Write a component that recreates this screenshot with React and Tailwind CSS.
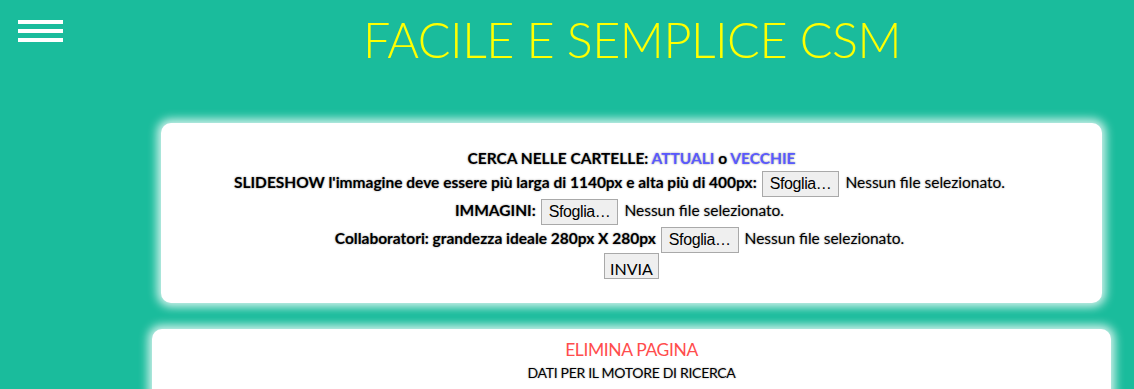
export default function App() {
  const fileRow = (
    <>
      <span className="inline-block ml-[5px] px-[7px] h-[26px] leading-[24px] border border-[#a9a9a9] bg-[#efefef] font-['Liberation_Sans',sans-serif] text-[16px] tracking-[-0.4px] font-normal text-black align-middle [text-shadow:none]">
        Sfoglia…
      </span>
      <span className="ml-[6px] font-normal">Nessun file selezionato.</span>
      <span className="inline-block w-[24px]" />
    </>
  );

  return (
    <main className="min-h-screen bg-[#1abc9c] font-['Lato','Noto_Sans',sans-serif] text-black overflow-hidden">
      {/* Header */}
      <header className="flex items-start h-[123px]">
        <button className="flex flex-col gap-[5px] ml-[18px] mt-[20px]">
          <span className="block w-[45px] h-[4px] bg-white" />
          <span className="block w-[45px] h-[4px] bg-white" />
          <span className="block w-[45px] h-[4px] bg-white" />
        </button>
        <h1 className="flex-1 text-center pl-[130px] pr-[63px] mt-[9px] text-[48.5px] font-light leading-[60px] text-[#ffff00] tracking-[-0.5px]">
          FACILE E SEMPLICE CSM
        </h1>
      </header>

      {/* Upload card */}
      <section className="ml-[161px] mr-[32px] h-[180px] bg-white rounded-[10px] shadow-[0_0_10px_4px_rgba(255,255,255,0.8)] pt-[25px] flex flex-col items-center text-[15.5px] font-bold [text-shadow:0_0_2px_rgba(0,0,0,0.45)]">
        <p className="leading-[20px]">
          CERCA NELLE CARTELLE: <span className="text-[#5959ff]">ATTUALI</span> o{" "}
          <span className="text-[#5959ff]">VECCHIE</span>
        </p>
        <p className="leading-[27px] mt-[1px]">
          SLIDESHOW l'immagine deve essere più larga di 1140px e alta più di 400px:
          {fileRow}
        </p>
        <p className="leading-[27px]">
          IMMAGINI:
          {fileRow}
        </p>
        <p className="leading-[27px]">
          Collaboratori: grandezza ideale 280px X 280px
          {fileRow}
        </p>
        <span className="mt-0 px-[5px] h-[26px] leading-[30px] border border-[#a9a9a9] bg-[#efefef] text-[16px] font-normal [text-shadow:none]">
          INVIA
        </span>
      </section>

      {/* Second card */}
      <section className="ml-[152px] mr-[23px] mt-[26px] h-[120px] bg-white rounded-[10px] shadow-[0_0_10px_4px_rgba(255,255,255,0.8)] pt-[10px] flex flex-col items-center">
        <p className="text-[17.5px] leading-[22px] text-[#ff4d4d] tracking-[-0.4px]">ELIMINA PAGINA</p>
        <p className="mt-[2px] text-[14px] leading-[20px] tracking-[-0.3px] [text-shadow:0_0_2px_rgba(0,0,0,0.35)]">
          DATI PER IL MOTORE DI RICERCA
        </p>
      </section>
    </main>
  );
}
